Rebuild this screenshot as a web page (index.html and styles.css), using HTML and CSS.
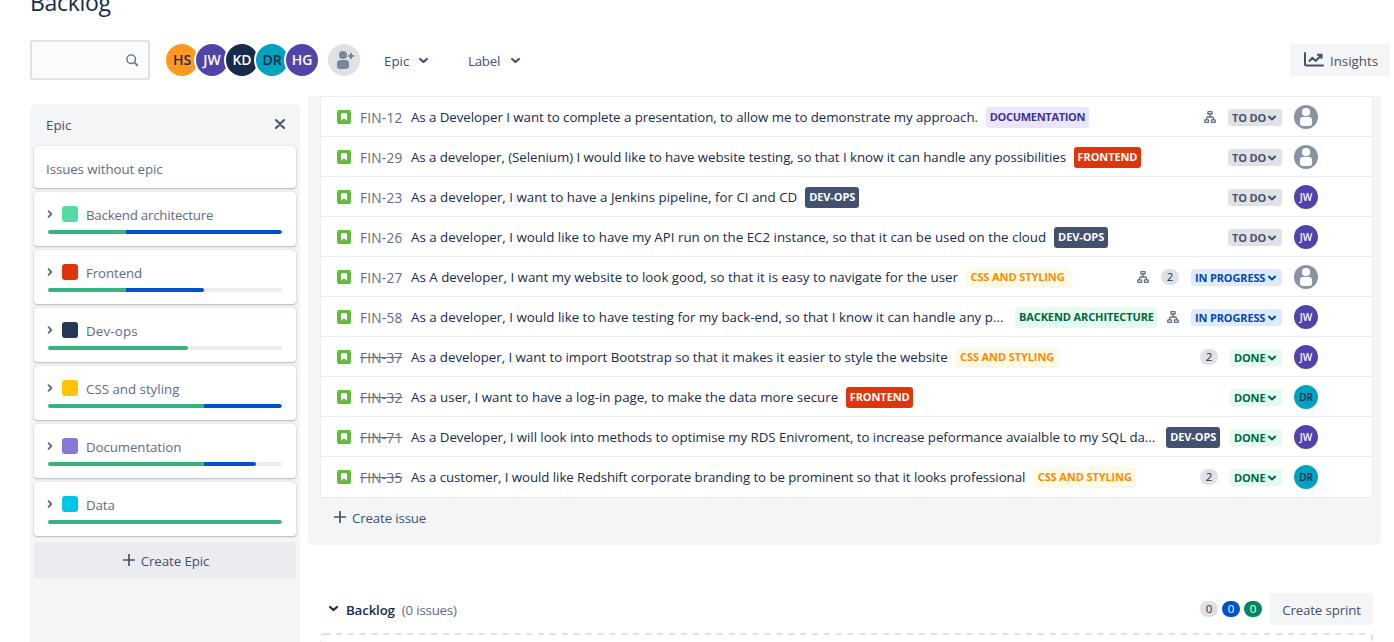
FILE: index.html
```html
<!DOCTYPE html>
<html lang="en">
<head>
<meta charset="utf-8">
<title>Backlog</title>
<link rel="stylesheet" href="styles.css">
</head>
<body>
<svg class="defs" width="0" height="0">
  <symbol id="down" viewBox="0 0 10 10"><path d="M1.9 3.6 5 6.4 8.1 3.6" fill="none" stroke="currentColor" stroke-width="2" stroke-linecap="round" stroke-linejoin="round"/></symbol>
  <symbol id="right" viewBox="0 0 10 10"><path d="M3.6 2.2 6.3 5 3.6 7.8" fill="none" stroke="currentColor" stroke-width="1.9" stroke-linecap="round" stroke-linejoin="round"/></symbol>
  <symbol id="plus" viewBox="0 0 12 12"><path d="M6 .5v11M.5 6h11" fill="none" stroke="currentColor" stroke-width="1.7" stroke-linecap="round"/></symbol>
  <symbol id="story" viewBox="0 0 14 14"><rect width="14" height="14" rx="2" fill="#63ba3c"/><path d="M4 3.2h6v7.6L7 8.2l-3 2.6z" fill="#fff"/></symbol>
  <symbol id="tree" viewBox="0 0 12 12"><g fill="none" stroke="currentColor" stroke-width="1.3"><rect x="3.9" y=".7" width="4.2" height="2.3" rx=".6"/><rect x=".7" y="8.9" width="3.9" height="2.4" rx=".6"/><rect x="7.4" y="8.9" width="3.9" height="2.4" rx=".6"/><path d="M6 3v2.9M2.6 8.9V7.2q0-1.2 1.2-1.2h4.4q1.2 0 1.2 1.2v1.7"/></g></symbol>
  <symbol id="person" viewBox="0 0 24 24"><circle cx="12" cy="12" r="12" fill="#8993a4"/><circle cx="12" cy="7.2" r="4.1" fill="#fff"/><path d="M6 15q0-3 3-3h6q3 0 3 3v3.3q0 2.7-3 2.7H9q-3 0-3-2.7z" fill="#fff"/></symbol>
</svg>

<h1 class="title">Backlog</h1>

<div class="toolbar">
  <div class="search"><svg width="14" height="14" viewBox="0 0 14 14"><circle cx="6.2" cy="6.2" r="4.3" fill="none" stroke="#5e6c84" stroke-width="1.4"/><path d="m9.5 9.5 2.8 2.8" stroke="#5e6c84" stroke-width="1.7" stroke-linecap="round"/></svg></div>
  <div class="people">
    <span class="member orange">HS</span><span class="member purple">JW</span><span class="member navy">KD</span><span class="member teal">DR</span><span class="member purple">HG</span>
  </div>
  <div class="add-person"><svg width="32" height="32" viewBox="0 0 32 32"><g fill="#7a869a"><circle cx="15" cy="11" r="4"/><path d="M9 19.5q0-3.5 3.5-3.5h5q3.5 0 3.5 3.5V22q0 3-3 3h-6q-3 0-3-3z"/></g><path d="M23 9v6M20 12h6" stroke="#7a869a" stroke-width="2"/></svg></div>
  <div class="filter epic-filter"><span>Epic</span><svg width="11" height="11"><use href="#down"/></svg></div>
  <div class="filter"><span class="t-label">Label</span><svg width="11" height="11"><use href="#down"/></svg></div>
  <div class="insights"><svg width="20" height="15" viewBox="0 0 20 15"><path d="M1 1v11q0 1.5 1.5 1.5H19" fill="none" stroke="#42526e" stroke-width="2" stroke-linecap="round"/><path d="m5 9.5 3.3-3.7 3.4 3L17 3.5M13 2.8h4.5v4" fill="none" stroke="#42526e" stroke-width="2"/></svg><span>Insights</span></div>
</div>

<div class="main">
  <aside class="epics">
    <header class="epics-head"><span>Epic</span><svg width="10" height="10" viewBox="0 0 10 10"><path d="m1 1 8 8M9 1 1 9" stroke="#42526e" stroke-width="2" stroke-linecap="round"/></svg></header>
    <div class="epic no-epic"><span>Issues without epic</span></div>
    <div class="epic"><div class="epic-row"><svg width="10" height="10"><use href="#right"/></svg><i class="swatch mint"></i><span class="e-backend">Backend architecture</span></div><div class="bar"><i class="done" style="width:78px"></i><i class="doing" style="width:156px"></i></div></div>
    <div class="epic"><div class="epic-row"><svg width="10" height="10"><use href="#right"/></svg><i class="swatch red"></i><span>Frontend</span></div><div class="bar"><i class="done" style="width:78px"></i><i class="doing" style="width:78px"></i></div></div>
    <div class="epic"><div class="epic-row"><svg width="10" height="10"><use href="#right"/></svg><i class="swatch ink"></i><span class="e-ops">Dev-ops</span></div><div class="bar"><i class="done" style="width:140px"></i></div></div>
    <div class="epic"><div class="epic-row"><svg width="10" height="10"><use href="#right"/></svg><i class="swatch yellow"></i><span class="e-css">CSS and styling</span></div><div class="bar"><i class="done" style="width:156px"></i><i class="doing" style="width:78px"></i></div></div>
    <div class="epic"><div class="epic-row"><svg width="10" height="10"><use href="#right"/></svg><i class="swatch violet"></i><span>Documentation</span></div><div class="bar"><i class="done" style="width:156px"></i><i class="doing" style="width:52px"></i></div></div>
    <div class="epic"><div class="epic-row"><svg width="10" height="10"><use href="#right"/></svg><i class="swatch cyan"></i><span>Data</span></div><div class="bar"><i class="done" style="width:234px"></i></div></div>
    <div class="create-epic"><svg width="12" height="12"><use href="#plus"/></svg><span>Create Epic</span></div>
  </aside>

  <div class="content">
    <section class="sprint">
      <div class="issues">
        <div class="issue"><svg class="story" width="14" height="14"><use href="#story"/></svg><span class="key">FIN-12</span><span class="summary s1">As a Developer I want to complete a presentation, to allow me to demonstrate my approach.</span><span class="tag doc">DOCUMENTATION</span><div class="meta"><svg class="tree" width="12" height="12"><use href="#tree"/></svg><span class="status todo">TO DO<svg width="10" height="10"><use href="#down"/></svg></span><svg width="24" height="24"><use href="#person"/></svg></div></div>
        <div class="issue"><svg class="story" width="14" height="14"><use href="#story"/></svg><span class="key">FIN-29</span><span class="summary s2">As a developer, (Selenium) I would like to have website testing, so that I know it can handle any possibilities</span><span class="tag front">FRONTEND</span><div class="meta"><span class="status todo">TO DO<svg width="10" height="10"><use href="#down"/></svg></span><svg width="24" height="24"><use href="#person"/></svg></div></div>
        <div class="issue"><svg class="story" width="14" height="14"><use href="#story"/></svg><span class="key">FIN-23</span><span class="summary s3">As a developer, I want to have a Jenkins pipeline, for CI and CD</span><span class="tag ops">DEV-OPS</span><div class="meta"><span class="status todo">TO DO<svg width="10" height="10"><use href="#down"/></svg></span><span class="avatar purple">JW</span></div></div>
        <div class="issue"><svg class="story" width="14" height="14"><use href="#story"/></svg><span class="key">FIN-26</span><span class="summary s4">As a developer, I would like to have my API run on the EC2 instance, so that it can be used on the cloud</span><span class="tag ops">DEV-OPS</span><div class="meta"><span class="status todo">TO DO<svg width="10" height="10"><use href="#down"/></svg></span><span class="avatar purple">JW</span></div></div>
        <div class="issue"><svg class="story" width="14" height="14"><use href="#story"/></svg><span class="key">FIN-27</span><span class="summary s5">As A developer, I want my website to look good, so that it is easy to navigate for the user</span><span class="tag css">CSS AND STYLING</span><div class="meta"><svg class="tree" width="12" height="12"><use href="#tree"/></svg><span class="badge">2</span><span class="status progress">IN PROGRESS<svg width="10" height="10"><use href="#down"/></svg></span><svg width="24" height="24"><use href="#person"/></svg></div></div>
        <div class="issue"><svg class="story" width="14" height="14"><use href="#story"/></svg><span class="key">FIN-58</span><span class="summary s6">As a developer, I would like to have testing for my back-end, so that I know it can handle any p...</span><span class="tag back">BACKEND ARCHITECTURE</span><div class="meta"><svg class="tree" width="12" height="12"><use href="#tree"/></svg><span class="status progress">IN PROGRESS<svg width="10" height="10"><use href="#down"/></svg></span><span class="avatar purple">JW</span></div></div>
        <div class="issue closed"><svg class="story" width="14" height="14"><use href="#story"/></svg><span class="key">FIN-37</span><span class="summary s7">As a developer, I want to import Bootstrap so that it makes it easier to style the website</span><span class="tag css">CSS AND STYLING</span><div class="meta"><span class="badge">2</span><span class="status finished">DONE<svg width="10" height="10"><use href="#down"/></svg></span><span class="avatar purple">JW</span></div></div>
        <div class="issue closed"><svg class="story" width="14" height="14"><use href="#story"/></svg><span class="key">FIN-32</span><span class="summary s8">As a user, I want to have a log-in page, to make the data more secure</span><span class="tag front">FRONTEND</span><div class="meta"><span class="status finished">DONE<svg width="10" height="10"><use href="#down"/></svg></span><span class="avatar teal">DR</span></div></div>
        <div class="issue closed"><svg class="story" width="14" height="14"><use href="#story"/></svg><span class="key">FIN-71</span><span class="summary s9">As a Developer, I will look into methods to optimise my RDS Enivroment, to increase peformance avaialble to my SQL da...</span><span class="tag ops">DEV-OPS</span><div class="meta"><span class="status finished">DONE<svg width="10" height="10"><use href="#down"/></svg></span><span class="avatar purple">JW</span></div></div>
        <div class="issue closed"><svg class="story" width="14" height="14"><use href="#story"/></svg><span class="key">FIN-35</span><span class="summary s10">As a customer, I would like Redshift corporate branding to be prominent so that it looks professional</span><span class="tag css">CSS AND STYLING</span><div class="meta"><span class="badge">2</span><span class="status finished">DONE<svg width="10" height="10"><use href="#down"/></svg></span><span class="avatar teal">DR</span></div></div>
      </div>
      <div class="create-issue"><svg width="12" height="12"><use href="#plus"/></svg><span>Create issue</span></div>
    </section>
    <section class="backlog">
      <header class="backlog-head"><svg width="11" height="11"><use href="#down"/></svg><strong>Backlog</strong><span class="count">(0 issues)</span><div class="totals"><span class="badge">0</span><span class="badge blue">0</span><span class="badge green">0</span></div><div class="create-sprint"><span>Create sprint</span></div></header>
      <div class="dropzone"><svg width="1053" height="30"><rect x="1" y="1" width="1051" height="60" rx="3" fill="none" stroke="#dfe1e6" stroke-width="2" stroke-dasharray="6 5.9"/></svg></div>
    </section>
  </div>
</div>
</body>
</html>
```
FILE: styles.css
```css
* { box-sizing: border-box; }
body { margin: 0; height: 642px; overflow: hidden; background: #fff; color: #172b4d; font: 13.3px/20px "Open Sans", "Noto Sans", sans-serif; }
svg { display: block; flex: none; }
.defs { height: 0; }
span, strong { white-space: nowrap; }
.title { margin: -12px 0 0 30px; height: 52px; font-size: 23px; line-height: 28px; font-weight: 400; letter-spacing: -0.3px; }

.toolbar { display: flex; align-items: center; height: 40px; padding: 0 4px 0 30px; color: #42526e; }
.search { width: 120px; height: 40px; border: 2px solid #dfe1e6; border-radius: 3px; background: #fafbfc; display: flex; align-items: center; justify-content: flex-end; padding-right: 9px; }
.people { display: flex; margin-left: 14px; }
.member { width: 36px; height: 36px; margin-right: -6px; border: 2px solid #fff; border-radius: 50%; font-size: 14px; font-weight: 600; line-height: 32px; text-align: center; }
.orange { background: #ff991f; color: #172b4d; }
.purple { background: #5243aa; color: #fff; }
.navy { background: #172b4d; color: #fff; }
.teal { background: #00a3bf; color: #172b4d; }
.add-person { margin-left: 14px; width: 32px; height: 32px; border-radius: 50%; background: #dfe1e6; }
.filter { display: flex; align-items: center; justify-content: space-between; width: 53px; margin-left: 39px; padding-top: 2px; }
.filter svg { margin-bottom: 1px; }
.epic-filter { width: 45px; margin-left: 24px; }
.t-label { letter-spacing: -.25px; }
.insights { margin-left: auto; width: 100px; height: 32px; padding: 2px 12px 0 14px; border-radius: 3px; background: #f4f5f7; display: flex; align-items: center; justify-content: space-between; }
.insights svg { margin-bottom: 3px; }

.main { display: flex; gap: 8px; padding: 16px 13px 0 30px; height: 562px; }
.epics { width: 270px; height: 560px; margin-top: 8px; padding: 0 4px; border-radius: 6px; background: #f4f5f7; color: #5e6c84; flex: none; }
.epics-head { height: 42px; padding: 0 11px 0 12px; display: flex; align-items: center; justify-content: space-between; color: #42526e; }
.epics-head svg { margin-bottom: 2px; }
.epic { height: 54px; margin-bottom: 4px; padding: 12px 14px 0; border-radius: 3px; background: #fff; box-shadow: 0 1px 2px rgba(9, 30, 66, .25), 0 0 1px rgba(9, 30, 66, .31); }
.no-epic { height: 42px; padding: 13px 12px 0; letter-spacing: -.08px; }
.epic-row { display: flex; align-items: center; height: 20px; }
.epic-row > svg { margin: 0 7px 1px -3px; }
.epic-row span { padding-top: 1px; letter-spacing: -.1px; }
.epic-row .e-backend { letter-spacing: -.22px; }
.epic-row .e-ops { letter-spacing: .2px; }
.epic-row .e-css { letter-spacing: 0; }
.swatch { width: 16px; height: 16px; margin-right: 8px; border-radius: 3px; }
.mint { background: #57d9a3; }
.red { background: #de350b; }
.ink { background: #253858; }
.yellow { background: #ffc400; }
.violet { background: #8777d9; }
.cyan { background: #00c7e6; }
.bar { display: flex; height: 4px; margin-top: 6px; border-radius: 2px; background: #ebecf0; overflow: hidden; }
.bar i { height: 4px; }
.bar i:last-child { border-radius: 0 2px 2px 0; }
.done { background: #36b37e; }
.doing { background: #0052cc; }
.create-epic { height: 36px; margin-top: 6px; border-radius: 3px; background: #ebecf0; display: flex; align-items: center; justify-content: center; gap: 6px; padding-left: 2px; color: #42526e; }
.create-epic span { padding-top: 2px; letter-spacing: -.1px; }

.content { flex: 1; min-width: 0; }
.sprint { height: 449px; padding: 0 8px 0 12px; border-radius: 0 0 6px 6px; background: #f4f5f7; }
.issues { height: 402px; background: #fff; border: 1px solid #ebecf0; }
.issue { height: 40px; padding: 1px 54px 0 16px; display: flex; align-items: center; border-bottom: 1px solid #ebecf0; }
.issue:last-child { border-bottom-color: transparent; }
.story { margin-right: 9px; }
.key { width: 51px; padding-top: 2px; color: #5e6c84; font-size: 13.6px; letter-spacing: .25px; }
.closed .key { width: 43px; margin-right: 8px; text-decoration: line-through; }
.summary { overflow: hidden; flex: none; }
.s1 { letter-spacing: -.056px; }
.s2 { letter-spacing: -.053px; }
.s3 { letter-spacing: .015px; }
.s4 { letter-spacing: .01px; }
.s5 { letter-spacing: .022px; }
.s6 { letter-spacing: .012px; margin-right: 4px; }
.s7 { letter-spacing: -.035px; }
.s8 { letter-spacing: .014px; }
.s9 { letter-spacing: -.052px; margin-right: 3px; }
.s10 { letter-spacing: -.066px; }
.tag { flex: none; height: 21px; margin-left: 8px; border-radius: 3px; font-size: 11px; line-height: 20px; font-weight: 700; text-align: center; letter-spacing: -.1px; }
.doc { width: 103px; background: #eae6ff; color: #403294; letter-spacing: -.3px; }
.front { width: 67px; background: #de350b; color: #fff; }
.ops { width: 54px; background: #42526e; color: #fff; }
.css { width: 103px; background: #fffae6; color: #ff8b00; }
.back { width: 142px; background: #e3fcef; color: #006644; }
.meta { display: flex; align-items: center; gap: 12px; margin-left: auto; }
.tree { color: #5e6c84; }
.badge { width: 18px; height: 16px; border-radius: 8px; background: #dfe1e6; color: #172b4d; font-size: 11.5px; line-height: 16px; text-align: center; }
.blue { background: #0052cc; color: #fff; }
.green { background: #00875a; color: #fff; }
.status { height: 17px; margin-top: 1px; padding: 0 5px 0 4px; border-radius: 3px; display: flex; align-items: center; justify-content: space-between; font-size: 11px; line-height: 17px; font-weight: 700; letter-spacing: -.15px; }
.todo { width: 54px; background: #dfe1e6; color: #42526e; }
.progress { width: 91px; background: #deebff; color: #0747a6; }
.finished { width: 52px; background: #e3fcef; color: #006644; }
.avatar { width: 24px; height: 24px; border-radius: 50%; font-size: 10px; line-height: 24px; font-weight: 600; text-align: center; }
.create-issue { display: flex; align-items: center; gap: 6px; height: 38px; padding-left: 14px; color: #42526e; letter-spacing: -.15px; }
.create-issue span { padding-top: 2px; }

.backlog { padding: 48px 8px 0 12px; }
.backlog-head { display: flex; align-items: center; height: 32px; padding-left: 8px; }
.backlog-head strong { margin: 2px 7px 0; font-weight: 600; letter-spacing: -.15px; }
.backlog-head > svg { margin-bottom: 2px; }
.count { padding-top: 2px; color: #5e6c84; letter-spacing: -.2px; }
.totals { display: flex; gap: 4px; margin-left: auto; }
.create-sprint { width: 103px; height: 32px; margin-left: 8px; padding: 7px 0 0; border-radius: 3px; background: #f4f5f7; color: #42526e; text-align: center; letter-spacing: -.15px; }
.dropzone { margin-top: 8px; height: 9px; overflow: hidden; }
```
